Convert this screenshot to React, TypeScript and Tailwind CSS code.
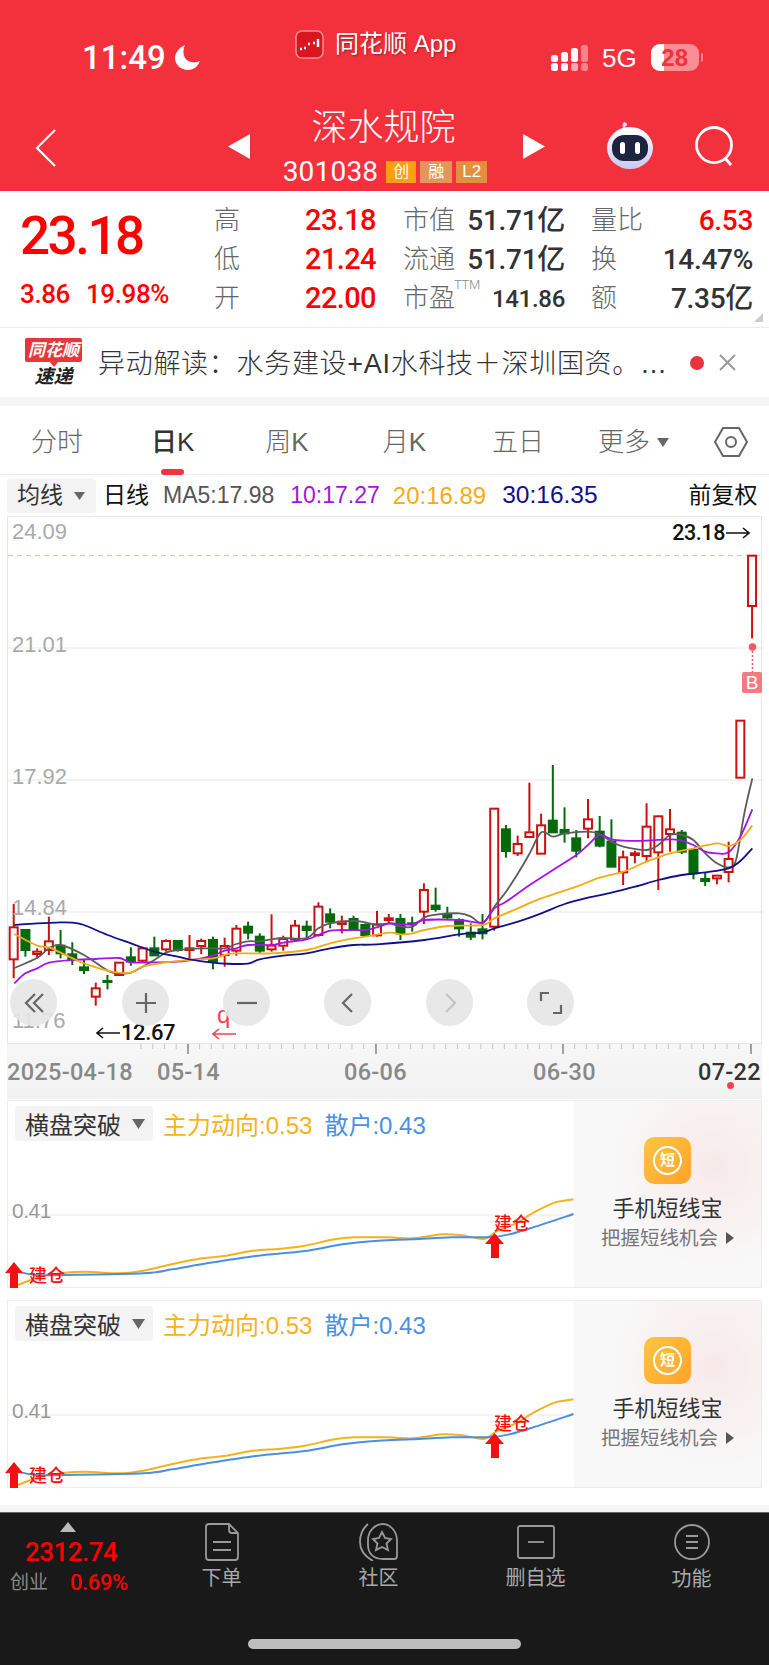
import React from 'react';

type Candle = [string, number, number, number, number];

// candle values are read off the chart as [type, high, bodyTop, bodyBottom, low]
const leftCandles: Candle[] = [
  ['r', 372, 442, 538, 595], ['g', 448, 450, 510, 530], ['r', 505, 515, 522, 535], ['r', 410, 484, 510, 525],
  ['g', 450, 497, 520, 535], ['g', 487, 523, 540, 555], ['g', 540, 562, 570, 582], ['r', 608, 625, 650, 677],
  ['g', 585, 603, 606, 628], ['r', 548, 548, 585, 585], ['g', 502, 532, 545, 557], ['r', 500, 505, 542, 545],
  ['g', 470, 505, 526, 526], ['r', 478, 483, 508, 515], ['g', 480, 483, 510, 515], ['r', 465, 505, 510, 535],
  ['r', 476, 483, 498, 522], ['g', 470, 480, 545, 568], ['r', 473, 498, 525, 560], ['r', 435, 446, 512, 527],
  ['g', 425, 440, 458, 478], ['g', 460, 470, 512, 520], ['r', 403, 497, 508, 515], ['r', 467, 477, 497, 512],
  ['r', 420, 437, 478, 485], ['g', 422, 440, 450, 475], ['r', 367, 380, 465, 470], ['g', 385, 403, 425, 445],
  ['r', 407, 425, 432, 460], ['g', 407, 417, 447, 447], ['g', 430, 435, 465, 470], ['r', 393, 433, 466, 470],
];

const rightCandles: Candle[] = [
  ['r', 1122, 1135, 1140, 1152], ['g', 1122, 1137, 1180, 1200], ['g', 1130, 1150, 1153, 1175], ['r', 1030, 1050, 1115, 1152],
  ['g', 1043, 1097, 1107, 1115], ['g', 1100, 1125, 1132, 1140], ['g', 1135, 1140, 1165, 1190], ['g', 1150, 1178, 1190, 1200],
  ['g', 1122, 1168, 1180, 1198], ['r', 805, 806, 1160, 1172], ['g', 855, 868, 933, 953], ['r', 887, 912, 940, 948],
  ['r', 728, 877, 891, 891], ['r', 821, 856, 941, 941], ['g', 675, 842, 877, 877], ['g', 802, 870, 880, 908],
  ['g', 870, 895, 932, 952], ['r', 777, 838, 866, 895], ['g', 828, 875, 917, 922], ['g', 838, 905, 980, 980],
  ['r', 932, 952, 997, 1035], ['r', 932, 940, 945, 970], ['r', 790, 860, 948, 965], ['r', 827, 829, 937, 1050],
  ['r', 807, 868, 882, 935], ['g', 870, 878, 935, 942], ['g', 930, 930, 1000, 1018], ['g', 998, 1017, 1023, 1038],
  ['r', 1005, 1007, 1015, 1033], ['r', 905, 957, 996, 1027], ['r', 542, 542, 713, 713], ['r', 46, 47, 198, 295],
];

const candles = [
  ...leftCandles.map((c) => [c[0], ...c.slice(1).map((v) => 780 + (v as number) / 3)]),
  ...rightCandles.map((c) => [c[0], ...c.slice(1).map((v) => 540 + (v as number) / 3)]),
] as Candle[];

const left = (pts: number[][]) => pts.map(([x, y]) => [x / 3, 780 + y / 3]);
const right = (pts: number[][]) => pts.map(([x, y]) => [385 + x / 3, 540 + y / 3]);

const ma5 = [
  ...left([[38, 565], [109, 533], [144, 505], [179, 495], [249, 525], [320, 572], [355, 580], [390, 578], [425, 560], [460, 540], [495, 518], [530, 510], [600, 505], [670, 505], [706, 492], [741, 484], [776, 484], [812, 478], [847, 474], [917, 474], [952, 445], [987, 430], [1057, 423], [1093, 427], [1128, 435]]),
  ...right([[10, 1150], [45, 1160], [80, 1160], [115, 1132], [150, 1124], [220, 1120], [255, 1130], [290, 1150], [325, 1100], [360, 1055], [396, 1000], [431, 940], [466, 877], [501, 890], [536, 880], [606, 875], [641, 882], [677, 905], [712, 920], [782, 930], [817, 915], [852, 885], [887, 885], [922, 900], [958, 940], [993, 970], [1028, 982], [1050, 960], [1075, 820], [1099, 715]]),
];
const ma10 = [
  ...left([[40, 610], [73, 580], [109, 565], [144, 548], [214, 540], [285, 537], [355, 534], [390, 547], [460, 547], [530, 545], [601, 535], [636, 527], [671, 512], [706, 505], [741, 495], [812, 495], [847, 488], [917, 478], [952, 465], [987, 452], [1022, 450], [1093, 450], [1128, 442]]),
  ...right([[10, 1150], [45, 1153], [80, 1153], [115, 1140], [220, 1140], [290, 1147], [325, 1105], [360, 1085], [431, 1035], [501, 990], [571, 945], [606, 915], [641, 885], [677, 898], [712, 902], [782, 902], [852, 898], [887, 902], [922, 915], [958, 935], [993, 940], [1028, 937], [1063, 890], [1099, 808]]),
];
const ma20 = [
  ...left([[40, 462], [109, 497], [144, 502], [179, 518], [249, 550], [320, 572], [355, 578], [390, 578], [425, 560], [495, 547], [566, 540], [636, 535], [671, 525], [706, 520], [812, 520], [917, 510], [987, 490], [1040, 478], [1093, 470]]),
  ...right([[10, 1178], [45, 1183], [80, 1180], [115, 1170], [185, 1158], [290, 1155], [325, 1135], [396, 1105], [466, 1075], [571, 1040], [641, 1013], [712, 995], [782, 965], [852, 940], [922, 925], [993, 910], [1028, 918], [1063, 900], [1099, 857]]),
];
const ma30 = [
  ...left([[40, 435], [109, 430], [179, 427], [214, 428], [249, 435], [320, 465], [390, 490], [460, 515], [530, 530], [566, 538], [636, 548], [671, 551], [741, 551], [776, 538], [847, 527], [917, 520], [987, 505], [1057, 495], [1128, 493]]),
  ...right([[115, 1200], [220, 1183], [290, 1177], [325, 1165], [396, 1145], [466, 1120], [536, 1092], [606, 1073], [677, 1058], [747, 1040], [817, 1020], [887, 1005], [958, 997], [1028, 985], [1063, 963], [1099, 925]]),
];

const panelOrange = [[35, 585], [80, 560], [130, 548], [175, 545], [240, 550], [290, 542], [350, 522], [410, 505], [460, 497], [510, 483], [570, 476], [620, 467], [680, 448], [720, 442], [790, 442], [840, 445], [900, 433], [940, 436], [985, 447], [1010, 425], [1050, 400], [1090, 365], [1130, 338], [1168, 328]];
const panelBlue = [[35, 545], [70, 555], [130, 555], [290, 550], [350, 538], [420, 520], [520, 498], [620, 483], [700, 462], [770, 452], [840, 448], [920, 442], [1000, 441], [1040, 432], [1090, 410], [1168, 372]];

function smooth(pts: number[][]) {
  let d = `M${pts[0][0]} ${pts[0][1]}`;
  for (let i = 0; i < pts.length - 1; i++) {
    const a = pts[Math.max(i - 1, 0)];
    const b = pts[i];
    const c = pts[i + 1];
    const e = pts[Math.min(i + 2, pts.length - 1)];
    d += ` C${b[0] + (c[0] - a[0]) / 6} ${b[1] + (c[1] - a[1]) / 6} ${c[0] - (e[0] - b[0]) / 6} ${c[1] - (e[1] - b[1]) / 6} ${c[0]} ${c[1]}`;
  }
  return d;
}

function KChart() {
  return (
    <svg className="absolute left-0 top-0" width="755" height="528" viewBox="7 517 755 528">
      {[648, 780, 912].map((y) => (
        <line key={y} x1="7" x2="762" y1={y} y2={y} stroke="#e8e8e8" strokeWidth="1" />
      ))}
      <line x1="7" x2="762" y1="555.5" y2="555.5" stroke="#d9c79e" strokeWidth="1" strokeDasharray="5 4" />
      {candles.map((c, i) => {
        const x = 12.7 + i * 11.72;
        const color = c[0] === 'r' ? '#cc1010' : '#046a0c';
        return (
          <g key={i}>
            <line x1={x} x2={x} y1={c[1]} y2={c[2]} stroke={color} strokeWidth="2" />
            <line x1={x} x2={x} y1={c[3]} y2={c[4]} stroke={color} strokeWidth="2" />
            <rect
              x={x - 4}
              y={c[2]}
              width="8"
              height={Math.max(c[3] - c[2], 1)}
              fill={c[0] === 'r' ? '#fff' : color}
              stroke={color}
              strokeWidth="2"
            />
          </g>
        );
      })}
      <path d={smooth(ma5)} fill="none" stroke="#5c5c5c" strokeWidth="1.8" />
      <path d={smooth(ma10)} fill="none" stroke="#a414e8" strokeWidth="1.8" />
      <path d={smooth(ma20)} fill="none" stroke="#f5ac12" strokeWidth="1.8" />
      <path d={smooth(ma30)} fill="none" stroke="#10108c" strokeWidth="1.8" />
      <circle cx="751.5" cy="647" r="3.8" fill="#ee5a62" />
      <line x1="751.5" x2="751.5" y1="651" y2="672" stroke="#ee5a62" strokeWidth="1.5" strokeDasharray="2 2" />
    </svg>
  );
}

function RoundButton({ className, children }: { className: string; children: React.ReactNode }) {
  return (
    <div className={`absolute top-[462px] flex h-[47px] w-[47px] items-center justify-center rounded-full bg-[#e6e6e6]/90 ${className}`}>
      <svg width="28" height="28" viewBox="0 0 28 28" fill="none" strokeWidth="2.2">
        {children}
      </svg>
    </div>
  );
}

function ThinArrow({ flip, color }: { flip?: boolean; color: string }) {
  return (
    <svg className={flip ? 'rotate-180' : ''} width="24" height="12" viewBox="0 0 24 12" fill="none">
      <path d="M0 6H23M17 1L23 6L17 11" stroke={color} strokeWidth="1.6" />
    </svg>
  );
}

function IndicatorPanel() {
  return (
    <div className="mx-[7px] flex h-[188px] border border-[#ececec]">
      <div className="relative w-[566px] bg-white">
        <svg className="absolute left-0 top-0 overflow-visible" width="566" height="187" viewBox="7 1101 566 187">
          <line x1="7" x2="573" y1="1215" y2="1215" stroke="#e8e8e8" />
          <path d={smooth(panelOrange.map(([x, y]) => [x / 2.04, 1090 + y / 3]))} fill="none" stroke="#f5b21c" strokeWidth="2" />
          <path d={smooth(panelBlue.map(([x, y]) => [x / 2.04, 1090 + y / 3]))} fill="none" stroke="#4a90e2" strokeWidth="2" />
          <path d="M13 1262 L22 1273 L17 1273 L17 1288 L9 1288 L9 1273 L4 1273 Z" fill="#f60f0f" />
          <path d="M493.500 1233 L503 1244 L498 1244 L498 1258 L490 1258 L490 1244 L484 1244 Z" fill="#f60f0f" />
        </svg>
        <div className="relative flex items-center pl-[7px] pt-[5px]">
          <div className="flex h-[35px] w-[138px] items-center rounded bg-[#f3f3f3] pl-[10px] text-[24px] leading-none text-[#333]">
            <span className="pt-[4px]">横盘突破</span>
            <svg className="ml-[11px]" width="13" height="10" viewBox="0 0 13 10"><path d="M0 0H13L6.500 10Z" fill="#666" /></svg>
          </div>
          <span className="ml-[10px] pt-[4px] text-[24px] leading-none text-[#f5b21c]">主力动向:0.53</span>
          <span className="ml-[12px] pt-[4px] text-[24px] leading-none text-[#4a90e2]">散户:0.43</span>
        </div>
        <div className="absolute left-[4px] top-[94px] text-[21px] tracking-[-0.5px] text-[#999]">0.41</div>
        <div className="absolute left-[21px] top-[161px] text-[18px] font-medium leading-[28px] text-[#f60f0f]">建仓</div>
        <div className="absolute left-[486px] top-[109px] text-[18px] font-medium leading-[28px] text-[#f60f0f]">建仓</div>
      </div>
      <div className="flex flex-1 flex-col items-center bg-[radial-gradient(circle_at_75%_35%,#f8e9e9_0%,#f8f8f8_55%)] pt-[36px]">
        <div className="flex h-[47px] w-[47px] items-center justify-center rounded-[10px] bg-gradient-to-br from-[#fdc443] to-[#fda42a]">
          <div className="flex h-[29px] w-[29px] items-center justify-center rounded-full border-2 border-white text-[15px] font-bold text-white">短</div>
        </div>
        <div className="mt-[9px] text-[22px] leading-[32px] text-[#333]">手机短线宝</div>
        <div className="flex items-center text-[19.500px] leading-[26px] text-[#777]">
          把握短线机会
          <svg className="ml-[8px]" width="8" height="12" viewBox="0 0 8 12"><path d="M0 0L8 6L0 12Z" fill="#555" /></svg>
        </div>
      </div>
    </div>
  );
}

function SignalBars() {
  const cols = [
    ['bg-white', 'bg-white'],
    ['bg-white', 'bg-white'],
    ['bg-white', 'bg-white/60'],
    ['bg-white/40', 'bg-white/40'],
  ];
  const heights = ['h-[7px]', 'h-[10px]', 'h-[14px]', 'h-[17px]'];
  return (
    <div className="flex w-[37px] items-end gap-[3px]">
      {cols.map((c, i) => (
        <div key={i} className="flex flex-col gap-[1px]">
          <div className={`w-[7px] rounded-[2.500px] ${heights[i]} ${c[0]}`} />
          <div className={`h-[8px] w-[7px] rounded-[2.500px] ${c[1]}`} />
        </div>
      ))}
    </div>
  );
}

const statRows = [
  { label: '高', price: '23.18', a: '市值', b: '51.71亿', c: '量比', d: '6.53', red: true },
  { label: '低', price: '21.24', a: '流通', b: '51.71亿', c: '换', d: '14.47%', red: false },
  { label: '开', price: '22.00', a: '市盈', b: '141.86', c: '额', d: '7.35亿', red: false },
];

export default function App() {
  return (
    <div className="relative h-[1665px] w-[769px] overflow-hidden bg-white font-['Liberation_Sans','Noto_Sans_CJK_SC',sans-serif]">
      {/* Red header */}
      <header className="h-[191px] bg-[#f3313c] text-white">
        <div className="flex h-[90px] pl-[82px] pt-[30px]">
          <div className="mt-[13px] flex h-[28px] w-[213px] items-center gap-[8px]">
            <span className="font-['Roboto',sans-serif] text-[33px] font-medium leading-none">11:49</span>
            <svg width="27" height="27" viewBox="0 0 27 27"><path d="M11 1C6 3 1 8 1 14C1 21 7 26 14 26C20 26 24 22 26 17C20 20 13 18 10.500 13C9 9 9 5 11 1Z" fill="#fff" /></svg>
          </div>
          <div className="flex h-[28px] w-[256px] items-center gap-[11px]">
            <svg width="29" height="29" viewBox="0 0 29 29">
              <rect x="1" y="1" width="27" height="27" rx="6" fill="#d9151f" stroke="#f8908f" strokeWidth="1.500" />
              <path d="M5 19h2M9 18h2M13 14h2M18 13h2M23 9v8" stroke="#fff" strokeWidth="2.500" />
            </svg>
            <span className="text-[24px] leading-none [text-shadow:1px_1px_2px_rgba(90,0,0,0.5)]">同花顺 App</span>
          </div>
          <div className="mt-[14px] flex h-[27px] items-center">
            <SignalBars />
            <span className="ml-[14px] text-[26px] leading-none">5G</span>
            <div className="relative ml-[14px] flex h-[27px] w-[48px] items-center justify-center overflow-hidden rounded-[9px] bg-white/45">
              <div className="absolute left-0 top-0 h-full w-[13px] bg-white" />
              <span className="relative text-[24px] font-bold leading-none text-[#f3313c]">28</span>
            </div>
            <div className="ml-[2px] h-[9px] w-[2px] rounded-r bg-white/45" />
          </div>
        </div>
        <div className="flex h-[101px] items-start pl-[34px]">
          <svg className="mt-[38px]" width="24" height="40" viewBox="0 0 24 40" fill="none"><path d="M21 2L3 20L21 38" stroke="#fff" strokeWidth="2.200" /></svg>
          <div className="ml-[170px] flex w-[317px] items-start">
            <svg className="mt-[44px]" width="22" height="25" viewBox="0 0 22 25"><path d="M22 0V25L0 12.500Z" fill="#fff" /></svg>
            <div className="flex w-[273px] flex-col items-center">
              <div className="mr-[6px] mt-[16px] h-[44px] text-[36px] font-light leading-[44px]">深水规院</div>
              <div className="mr-[3px] mt-[9px] flex items-center">
                <span className="font-['Roboto',sans-serif] text-[28px] leading-[26px] tracking-[0.2px]">301038</span>
                <span className="ml-[8px] flex h-[22px] w-[30px] items-center justify-center bg-[#fb9f13] text-[16px]">创</span>
                <span className="ml-[4px] flex h-[22px] w-[32px] items-center justify-center bg-[#e29659] text-[16px]">融</span>
                <span className="ml-[4px] flex h-[22px] w-[31px] items-center justify-center bg-[#e29040] text-[17px]">L2</span>
              </div>
            </div>
            <svg className="mt-[44px]" width="22" height="25" viewBox="0 0 22 25"><path d="M0 0V25L22 12.500Z" fill="#fff" /></svg>
          </div>
          <svg className="ml-[60px] mt-[32px]" width="50" height="48" viewBox="0 0 50 48">
            <defs>
              <linearGradient id="robotHead" x1="0" y1="0" x2="0" y2="1">
                <stop offset="0" stopColor="#ffffff" />
                <stop offset="1" stopColor="#c9c8f2" />
              </linearGradient>
            </defs>
            <path d="M20 7C18 4 18 2 20 1" stroke="#e7e3f5" strokeWidth="2" fill="none" />
            <circle cx="20" cy="2.500" r="2" fill="#e7e3f5" />
            <ellipse cx="25" cy="26" rx="23" ry="21" fill="url(#robotHead)" />
            <rect x="7" y="13" width="36" height="26" rx="12" fill="#1c2440" />
            <rect x="15" y="20" width="5" height="12" rx="2.500" fill="#fff" />
            <rect x="30" y="20" width="5" height="12" rx="2.500" fill="#fff" />
          </svg>
          <svg className="ml-[39px] mt-[36px]" width="42" height="42" viewBox="0 0 42 42" fill="none">
            <circle cx="20" cy="19" r="17.500" stroke="#fff" strokeWidth="2.800" />
            <path d="M31 32L37 39" stroke="#fff" strokeWidth="2.800" />
          </svg>
        </div>
      </header>

      {/* Quote block */}
      <section className="relative flex h-[137px] border-b border-[#ececec]">
        <div className="w-[214px] pl-[20px] pt-[17px] font-['Roboto','Noto_Sans_CJK_SC',sans-serif] text-[#f00]">
          <div className="text-[53px] font-medium leading-[56px] tracking-[-2.5px]">23.18</div>
          <div className="mt-[15px] flex text-[26px] font-medium leading-[30px] tracking-[-0.4px]">
            <span>3.86</span>
            <span className="ml-[16px]">19.98%</span>
          </div>
        </div>
        <div className="flex flex-col pt-[10px]">
          {statRows.map((r) => (
            <div key={r.label} className="flex h-[39px] items-center text-[26px]">
              <span className="w-[40px] font-light text-[#666]">{r.label}</span>
              <span className="w-[122px] text-right font-['Roboto',sans-serif] text-[29px] font-medium tracking-[-0.6px] text-[#f00]">{r.price}</span>
              <span className="ml-[27px] w-[54px] font-light text-[#666]">{r.a}</span>
              <span className={`relative w-[108px] text-right font-['Roboto','Noto_Sans_CJK_SC',sans-serif] font-medium tracking-[-0.3px] text-[#333] ${r.a === '市盈' ? 'text-[24px]' : 'text-[28px]'}`}>
                {r.a === '市盈' && <span className="absolute left-[-3px] top-[-6px] text-[13px] font-light text-[#888]">TTM</span>}
                {r.b}
              </span>
              <span className="ml-[26px] w-[52px] font-light text-[#666]">{r.c}</span>
              <span className={`w-[110px] text-right font-['Roboto','Noto_Sans_CJK_SC',sans-serif] text-[28px] font-medium tracking-[-0.3px] ${r.red ? 'text-[#f00]' : 'text-[#333]'}`}>{r.d}</span>
            </div>
          ))}
        </div>
        <svg className="absolute bottom-[5px] right-[6px]" width="9" height="9" viewBox="0 0 9 9"><path d="M9 0V9H0Z" fill="#ccc" /></svg>
      </section>

      {/* News ticker */}
      <section className="flex h-[69px] items-center pl-[25px]">
        <div className="flex w-[57px] flex-col items-center">
          <div className="relative flex h-[24px] w-[57px] items-center justify-center rounded-[2px] bg-[#e9353c] text-[17px] font-bold italic leading-none text-white">
            同花顺
            <div className="absolute bottom-[-5px] left-[24px] h-0 w-0 border-x-[5px] border-t-[6px] border-x-transparent border-t-[#e9353c]" />
          </div>
          <div className="mt-[5px] text-[19px] font-bold italic leading-[20px] text-[#222]">速递</div>
        </div>
        <span className="ml-[16px] mt-[4px] w-[576px] whitespace-nowrap text-[27px] font-light leading-none tracking-[0.7px] text-[#333]">异动解读：水务建设+AI水科技＋深圳国资。…</span>
        <div className="ml-[16px] h-[14px] w-[14px] rounded-full bg-[#e8323c]" />
        <svg className="ml-[15px]" width="17" height="17" viewBox="0 0 17 17"><path d="M1 1L16 16M16 1L1 16" stroke="#999" strokeWidth="2" /></svg>
      </section>

      {/* Period tabs */}
      <div className="h-[9px] bg-[#f5f5f5]" />
      <nav className="relative flex h-[69px] items-center border-b border-[#eeeeee] pt-[4px] text-[26px] font-light text-[#666]">
        <span className="ml-[31px]">分时</span>
        <span className="ml-[68px] font-medium text-[#333]">日K</span>
        <span className="ml-[71px]">周K</span>
        <span className="ml-[74px]">月K</span>
        <span className="ml-[66px]">五日</span>
        <span className="ml-[54px]">更多</span>
        <svg className="ml-[7px]" width="12" height="9" viewBox="0 0 12 9"><path d="M0 0H12L6 9Z" fill="#666" /></svg>
        <svg className="ml-[45px]" width="34" height="32" viewBox="0 0 34 32" fill="none">
          <path d="M9 2H25L33 16L25 30H9L1 16Z" stroke="#666" strokeWidth="2" />
          <circle cx="17" cy="16" r="5" stroke="#666" strokeWidth="2" />
        </svg>
        <div className="absolute bottom-[-1px] left-[161px] h-[6px] w-[23px] rounded-full bg-[#f5333f]" />
      </nav>

      {/* MA legend */}
      <div className="flex h-[41px] items-center pl-[7px] text-[23px] leading-none">
        <div className="flex h-[34px] w-[89px] items-center rounded bg-[#f3f3f3] pl-[10px] text-[#333]">
          均线
          <svg className="ml-[11px]" width="11" height="8" viewBox="0 0 11 8"><path d="M0 0H11L5.500 8Z" fill="#666" /></svg>
        </div>
        <span className="ml-[7px] text-[#111]">日线</span>
        <span className="ml-[14px] text-[#555]">MA5:17.98</span>
        <span className="ml-[16px] text-[#a414e8]">10:17.27</span>
        <span className="ml-[13px] text-[24px] text-[#f5ac12]">20:16.89</span>
        <span className="ml-[16px] text-[24.500px] text-[#10108c]">30:16.35</span>
        <span className="ml-[91px] text-[#111]">前复权</span>
      </div>

      {/* K line chart */}
      <div className="relative mx-[7px] h-[528px] w-[755px] border border-[#e8e8e8]">
        <KChart />
        <span className="absolute left-[4px] top-[2px] text-[22px] leading-[26px] text-[#aaa]">24.09</span>
        <span className="absolute left-[4px] top-[115px] text-[22px] leading-[26px] text-[#aaa]">21.01</span>
        <span className="absolute left-[4px] top-[247px] text-[22px] leading-[26px] text-[#aaa]">17.92</span>
        <span className="absolute left-[4px] top-[378px] text-[22px] leading-[26px] text-[#aaa]">14.84</span>
        <span className="absolute left-[4px] top-[491px] text-[22px] leading-[26px] text-[#aaa]">11.76</span>
        <div className="absolute right-[11px] top-[3px] flex items-center gap-[1px]">
          <span className="font-['Roboto',sans-serif] text-[21.500px] font-medium leading-[26px] tracking-[-0.4px] text-[#111]">23.18</span>
          <ThinArrow color="#111" />
        </div>
        <div className="absolute left-[88px] top-[503px] flex items-center gap-[1px]">
          <ThinArrow flip color="#111" />
          <span className="font-['Roboto',sans-serif] text-[22px] font-medium leading-[26px] tracking-[-0.4px] text-[#111]">12.67</span>
        </div>
        <span className="absolute left-[209px] top-[485px] text-[24px] leading-[26px] text-[#ee4452]">q</span>
        <div className="absolute left-[204px] top-[511px]"><ThinArrow flip color="#ee4452" /></div>
        <div className="absolute left-[734px] top-[155px] flex h-[21px] w-[20px] items-center justify-center rounded-[2px] bg-[#f27a80] text-[19px] leading-none text-white">B</div>
        <RoundButton className="left-[2px]">
          <path d="M15 5L6 14L15 23M23 5L14 14L23 23" stroke="#666" />
        </RoundButton>
        <RoundButton className="left-[114px]">
          <path d="M14 4V24M4 14H24" stroke="#666" />
        </RoundButton>
        <RoundButton className="left-[215px]">
          <path d="M4 14H24" stroke="#666" />
        </RoundButton>
        <RoundButton className="left-[316px]">
          <path d="M18 5L9 14L18 23" stroke="#666" />
        </RoundButton>
        <RoundButton className="left-[418px]">
          <path d="M10 5L19 14L10 23" stroke="#c4c4c4" />
        </RoundButton>
        <RoundButton className="left-[519px]">
          <path d="M4 12V4H12M24 16V24H16" stroke="#666" />
        </RoundButton>
      </div>

      {/* Date axis */}
      <div className="relative mx-[7px] h-[55px] w-[755px] bg-gradient-to-b from-[#f7f7f7] to-[#f1f1f1] font-['Roboto',sans-serif] text-[23.500px] font-medium tracking-[0.3px] text-[#888]">
        <svg className="absolute left-0 top-0" width="755" height="12" viewBox="7 1045 755 12">
          {Array.from({ length: 53 }, (_, i) => 141 + i * 11.72).map((x) => (
            <line key={x} x1={x} x2={x} y1="1045" y2="1050" stroke="#c4c4c4" />
          ))}
          {[188, 376, 563, 751].map((x) => (
            <line key={x} x1={x} x2={x} y1="1045" y2="1055" stroke="#888" strokeWidth="1.500" />
          ))}
        </svg>
        <div className="flex whitespace-nowrap pt-[15px] leading-[26px]">
          <span className="w-[125px]">2025-04-18</span>
          <span className="ml-[25px] w-[63px]">05-14</span>
          <span className="ml-[124px] w-[63px]">06-06</span>
          <span className="ml-[126px] w-[63px]">06-30</span>
          <span className="ml-[102px] w-[64px] text-[#333]">07-22</span>
        </div>
        <div className="absolute left-[720px] top-[38px] h-[7px] w-[7px] rounded-full bg-[#ee4452]" />
      </div>

      {/* Indicator panels */}
      <div className="flex flex-col gap-[12px] pt-[1px]">
        <IndicatorPanel />
        <IndicatorPanel />
      </div>

      {/* Bottom bar */}
      <div className="mt-[17px] h-[7px] bg-[#f5f5f5]" />
      <footer className="h-[153px] border-t border-[#666] bg-[#191919] text-[#aaa]">
        <div className="flex">
          <div className="flex w-[143px] flex-col pl-[10px] pt-[9px]">
            <div className="ml-[50px] h-0 w-0 border-x-[8.500px] border-b-[10px] border-x-transparent border-b-[#bbb]" />
            <div className="ml-[15px] mt-[5px] font-['Roboto',sans-serif] text-[26px] font-medium leading-[30px] tracking-[-0.5px] text-[#f00]">2312.74</div>
            <div className="mt-[2px] flex items-center leading-[28px]">
              <span className="text-[19px] text-[#888]">创业</span>
              <span className="ml-[22px] font-['Roboto',sans-serif] text-[22px] font-medium tracking-[-0.4px] text-[#f00]">0.69%</span>
            </div>
          </div>
          <div className="flex w-[157px] flex-col items-center pt-[10px]">
            <svg width="34" height="38" viewBox="0 0 34 38" fill="none" stroke="#999" strokeWidth="1.800">
              <path d="M24 1H4C2 1 1 2 1 4V34C1 36 2 37 4 37H30C32 37 33 36 33 34V10Z" />
              <path d="M24 1V7C24 9 25 10 27 10H33M8 19H26M8 27H26" />
            </svg>
            <span className="mt-[3px] text-[20px] leading-[28px]">下单</span>
          </div>
          <div className="flex w-[157px] flex-col items-center pt-[10px]">
            <svg width="40" height="38" viewBox="0 0 40 38" fill="none" stroke="#999" strokeWidth="1.800">
              <path d="M9 1C3 6 1 12 1 19C1 26 5 33 14 38" />
              <path d="M24 1C31 1 38 8 38 18V33C38 35 37 36 35 36H24C15 36 9 31 9 22V17C9 8 16 1 24 1Z" />
              <path d="M23 9L26 15L32 16L27.500 20.500L29 27L23 24L17 27L18.500 20.500L14 16L20 15Z" />
            </svg>
            <span className="mt-[3px] text-[20px] leading-[28px]">社区</span>
          </div>
          <div className="flex w-[157px] flex-col items-center pt-[12px]">
            <svg width="38" height="34" viewBox="0 0 38 34" fill="none" stroke="#999" strokeWidth="1.800">
              <rect x="1" y="1" width="36" height="32" rx="2" />
              <path d="M11 17H27" />
            </svg>
            <span className="mt-[5px] text-[20px] leading-[28px]">删自选</span>
          </div>
          <div className="flex w-[155px] flex-col items-center pt-[11px]">
            <svg width="36" height="36" viewBox="0 0 36 36" fill="none" stroke="#999" strokeWidth="1.800">
              <circle cx="18" cy="18" r="17" />
              <path d="M12 12H24M12 18H24M12 24H24" />
            </svg>
            <span className="mt-[5px] text-[20px] leading-[28px]">功能</span>
          </div>
        </div>
        <div className="ml-[248px] mt-[42px] h-[10px] w-[273px] rounded-full bg-[#bdbdbd]" />
      </footer>
    </div>
  );
}
